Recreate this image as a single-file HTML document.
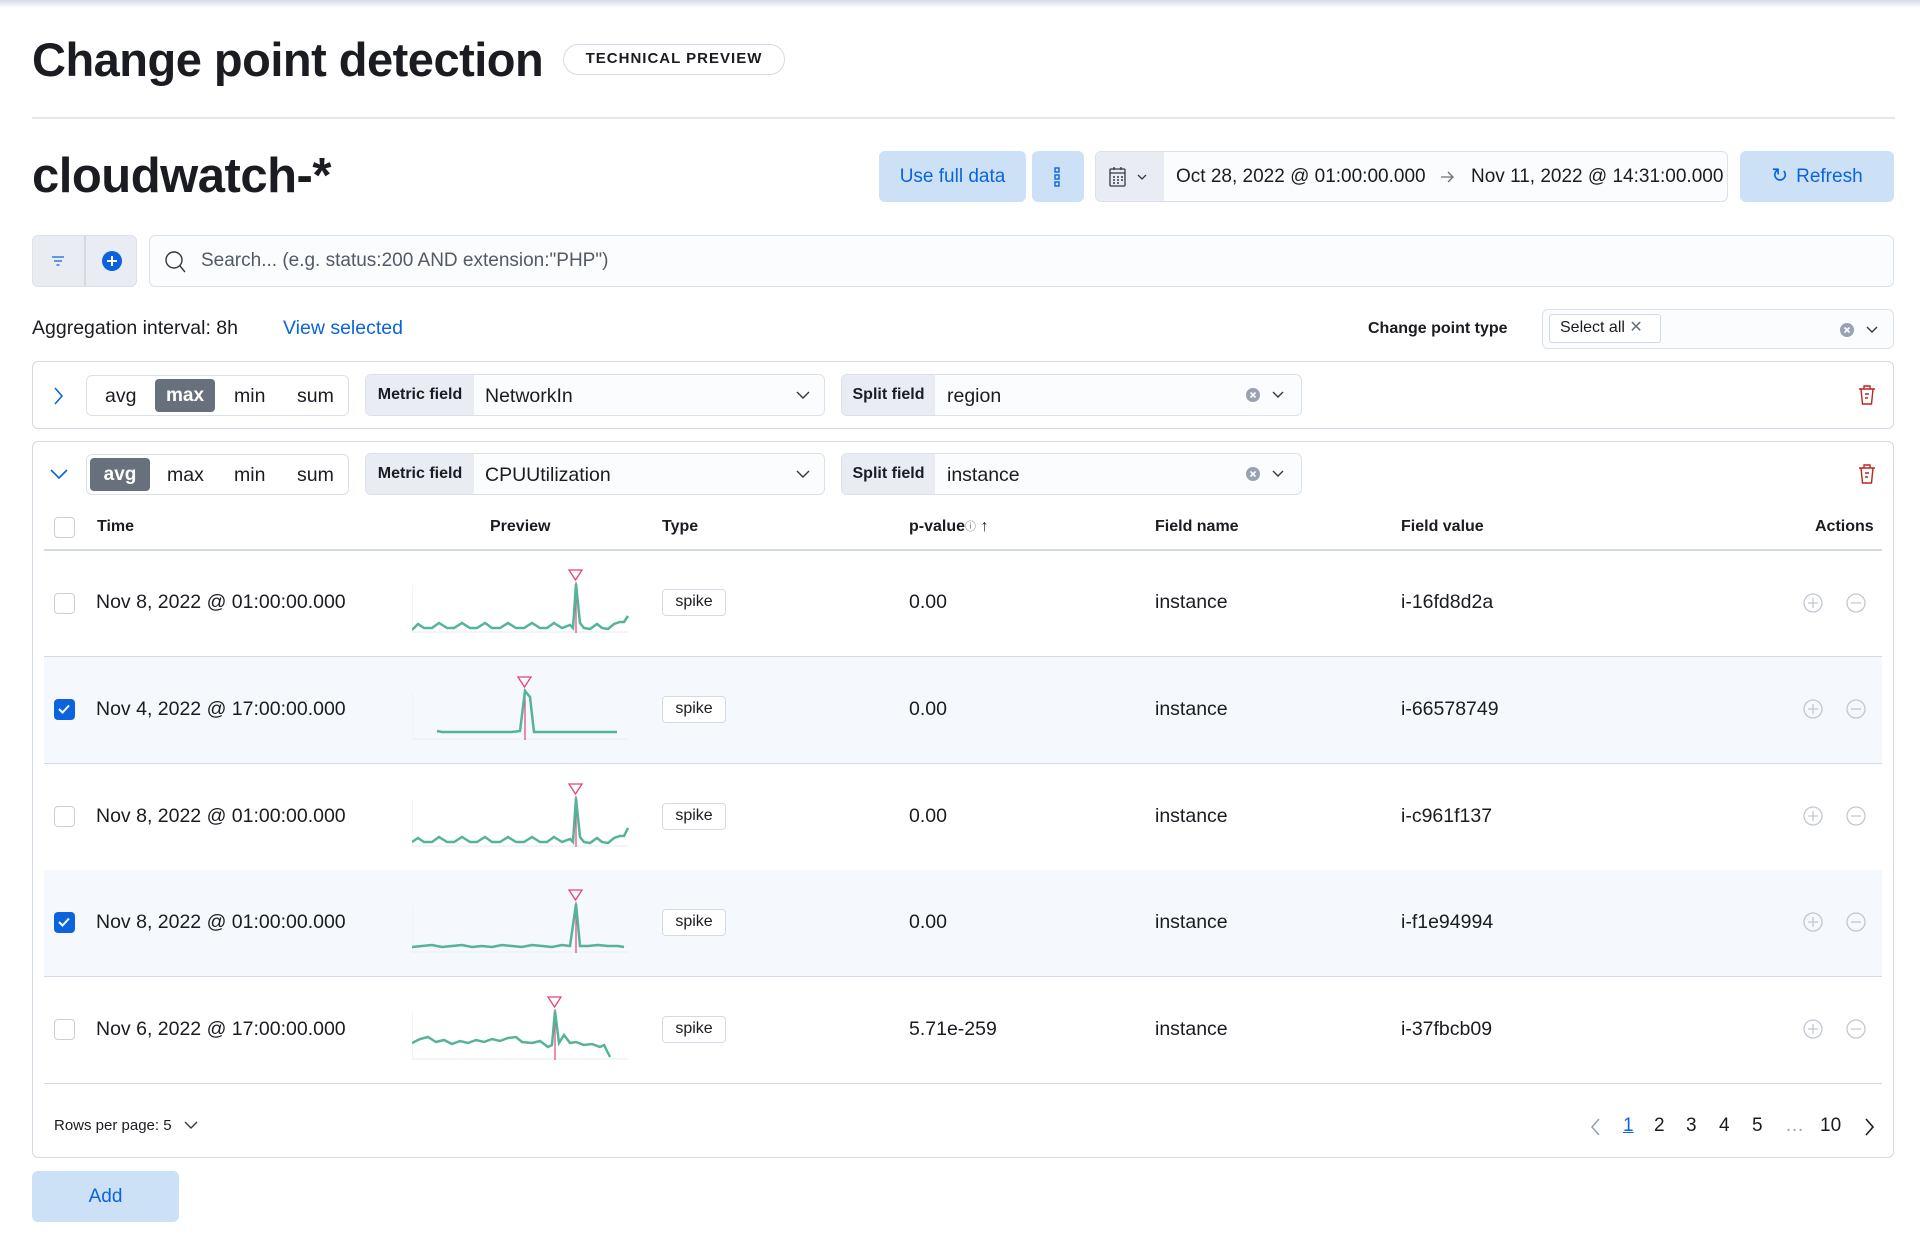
<!DOCTYPE html>
<html><head><meta charset="utf-8">
<style>
*{box-sizing:border-box;margin:0;padding:0}
body{width:1920px;height:1247px;background:#fff;font-family:"Liberation Sans",sans-serif;color:#1a1c21;position:relative;overflow:hidden}
.a{position:absolute}
.topsh{left:0;top:0;width:1920px;height:8px;background:linear-gradient(#d3dae6,#fff)}
h1{position:absolute;left:32px;top:32px;font-size:47px;font-weight:700;letter-spacing:-0.5px;color:#1a1c21}
.badge{left:563px;top:44px;width:222px;height:31px;border:1.5px solid #d3dae6;border-radius:16px;font-size:15px;font-weight:700;letter-spacing:1px;text-align:center;line-height:28px}
.hr{left:32px;top:117px;width:1863px;height:2px;background:#e3e8f0}
h2{position:absolute;left:32px;top:148px;font-size:49px;font-weight:700;letter-spacing:-0.5px}
.btn{background:#cce1f5;color:#0b64dd;border-radius:6px;font-size:19px;text-align:center}
.box{border:1.5px solid #dbe1ea;background:#fbfcfd;border-radius:6px}
.txt{font-size:19.5px;white-space:nowrap}
.lab{background:#e9edf3;font-size:16px;font-weight:700;display:flex;align-items:center;justify-content:center}
.th{font-size:16px;font-weight:700;top:518px}
.row{left:44px;width:1838px;height:107px;border-bottom:1.5px solid #d3dae6}
.sel{background:#f5f8fc}
.cb{width:21px;height:21px;border:1.5px solid #c9d0da;border-radius:4px;background:#fff}
.cb.on{background:#0b64dd;border-color:#0b64dd}
.spike{width:64px;height:27px;border:1.5px solid #d3dae6;border-radius:4px;font-size:16px;text-align:center;line-height:24px;background:#fff}
</style></head><body>
<div class="a topsh"></div>
<h1>Change point detection</h1>
<div class="a badge">TECHNICAL PREVIEW</div>
<div class="a hr"></div>
<h2>cloudwatch-*</h2>

<div class="a btn" style="left:879px;top:151px;width:147px;height:51px;line-height:51px">Use full data</div>
<div class="a btn" style="left:1032px;top:151px;width:52px;height:51px">
<svg class="a" style="left:20px;top:16px" width="10" height="20"><g fill="none" stroke="#0b64dd" stroke-width="1.4"><rect x="3" y="1" width="4" height="4"/><rect x="3" y="8" width="4" height="4"/><rect x="3" y="15" width="4" height="4"/></g></svg></div>
<div class="a box" style="left:1095px;top:151px;width:633px;height:51px;overflow:hidden">
<div class="a" style="left:0;top:0;width:68px;height:49px;background:#e9edf3"></div>
<svg class="a" style="left:13px;top:14px" width="40" height="22"><g fill="none" stroke="#343741" stroke-width="1.3"><rect x="1" y="3" width="15" height="17" rx="1"/><line x1="1" y1="7" x2="16" y2="7"/><line x1="5" y1="1" x2="5" y2="4"/><line x1="12" y1="1" x2="12" y2="4"/><path d="M4 11h2M8 11h2M12 11h2M4 14h2M8 14h2M12 14h2M4 17h2M8 17h2" stroke-width="1.5"/><path d="M29 9l4 4 4-4"/></g></svg>
<div class="a txt" style="left:80px;top:14px;font-size:19px">Oct 28, 2022 @ 01:00:00.000</div>
<svg class="a" style="left:343px;top:17px" width="16" height="16"><path d="M2 8h12M9 3l5 5-5 5" fill="none" stroke="#69707d" stroke-width="1.3"/></svg>
<div class="a txt" style="left:375px;top:14px;font-size:19px">Nov 11, 2022 @ 14:31:00.000</div>
</div>
<div class="a btn" style="left:1740px;top:151px;width:154px;height:51px;line-height:51px"><span style="display:inline-block;margin-right:8px;font-size:20px">↻</span>Refresh</div>

<div class="a box" style="left:32px;top:235px;width:105px;height:52px;background:#e9edf3;overflow:hidden">
<div class="a" style="left:51px;top:0;width:1.5px;height:52px;background:#d3dae6"></div>
<svg class="a" style="left:18px;top:19px" width="14" height="12"><g stroke="#0b64dd" stroke-width="1.3"><line x1="1" y1="2" x2="13" y2="2"/><line x1="3" y1="6" x2="11" y2="6"/><line x1="5.5" y1="10" x2="8.5" y2="10"/></g></svg>
<svg class="a" style="left:68px;top:14px" width="22" height="22"><circle cx="11" cy="11" r="10" fill="#0b64dd"/><path d="M11 6v10M6 11h10" stroke="#fff" stroke-width="2"/></svg>
</div>
<div class="a box" style="left:149px;top:235px;width:1745px;height:52px">
<svg class="a" style="left:14px;top:14px" width="24" height="24"><circle cx="10" cy="10" r="8" fill="none" stroke="#343741" stroke-width="1.4"/><line x1="16" y1="16" x2="21" y2="22" stroke="#343741" stroke-width="1.4"/></svg>
<div class="a txt" style="left:51px;top:14px;color:#535966;font-size:19px">Search... (e.g. status:200 AND extension:"PHP")</div>
</div>

<div class="a txt" style="left:32px;top:317px">Aggregation interval: 8h</div>
<div class="a txt" style="left:283px;top:317px;color:#0b64dd">View selected</div>
<div class="a" style="left:1368px;top:320px;font-size:16px;font-weight:700">Change point type</div>
<div class="a box" style="left:1542px;top:309px;width:352px;height:40px">
<div class="a" style="left:6px;top:4px;width:112px;height:29px;border:1.5px solid #d3dae6;border-radius:3px;background:#fff;font-size:16px;line-height:26px;padding-left:10px">Select all <span style="color:#69707d">✕</span></div>
<svg class="a" style="left:296px;top:10px" width="50" height="20"><circle cx="8" cy="10" r="7" fill="#98a2b3"/><path d="M5.5 7.5l5 5M10.5 7.5l-5 5" stroke="#fff" stroke-width="1.6"/><path d="M28 7l5 5 5-5" fill="none" stroke="#343741" stroke-width="1.4"/></svg>
</div>

<!-- Panel 1 -->
<div class="a" style="left:32px;top:361px;width:1862px;height:68px;border:1.5px solid #d3dae6;border-radius:6px"></div>
<svg class="a" style="left:52px;top:386px" width="12" height="20"><path d="M3 2l7 8-7 8" fill="none" stroke="#0b64dd" stroke-width="1.6"/></svg>
<div class="a box" style="left:86px;top:375px;width:263px;height:41px;background:#fff">
<div class="a txt" style="left:18px;top:9px">avg</div>
<div class="a" style="left:68px;top:3px;width:60px;height:33px;background:#69707d;border-radius:4px;color:#fff;font-weight:700;font-size:19px;text-align:center;line-height:33px">max</div>
<div class="a txt" style="left:147px;top:9px">min</div>
<div class="a txt" style="left:210px;top:9px">sum</div>
</div>
<div class="a box" style="left:365px;top:374px;width:460px;height:42px;overflow:hidden">
<div class="a lab" style="left:0;top:0;width:108px;height:40px">Metric field</div>
<div class="a txt" style="left:119px;top:10px">NetworkIn</div>
<svg class="a" style="left:430px;top:14px" width="14" height="12"><path d="M1 3l6 6 6-6" fill="none" stroke="#343741" stroke-width="1.4"/></svg>
</div>
<div class="a box" style="left:841px;top:374px;width:461px;height:42px;overflow:hidden">
<div class="a lab" style="left:0;top:0;width:93px;height:40px">Split field</div>
<div class="a txt" style="left:105px;top:10px">region</div>
<svg class="a" style="left:403px;top:10px" width="50" height="20"><circle cx="8" cy="10" r="7" fill="#98a2b3"/><path d="M5.5 7.5l5 5M10.5 7.5l-5 5" stroke="#fff" stroke-width="1.6"/><path d="M28 7l5 5 5-5" fill="none" stroke="#343741" stroke-width="1.4"/></svg>
</div>
<svg class="a" style="left:1857px;top:384px" width="20" height="22"><g fill="none" stroke="#bd271e" stroke-width="1.4"><path d="M2 5h16M7 5V2h6v3M4 5l1.5 15h9L16 5M8 10h4M8 14h3"/></g></svg>

<!-- Panel 2 -->
<div class="a" style="left:32px;top:441px;width:1862px;height:717px;border:1.5px solid #d3dae6;border-radius:6px"></div>
<svg class="a" style="left:49px;top:467px" width="20" height="14"><path d="M2 3l8 8 8-8" fill="none" stroke="#0b64dd" stroke-width="1.6"/></svg>
<div class="a box" style="left:86px;top:454px;width:263px;height:41px;background:#fff">
<div class="a" style="left:3px;top:3px;width:60px;height:33px;background:#69707d;border-radius:4px;color:#fff;font-weight:700;font-size:19px;text-align:center;line-height:33px">avg</div>
<div class="a txt" style="left:80px;top:9px">max</div>
<div class="a txt" style="left:147px;top:9px">min</div>
<div class="a txt" style="left:210px;top:9px">sum</div>
</div>
<div class="a box" style="left:365px;top:453px;width:460px;height:42px;overflow:hidden">
<div class="a lab" style="left:0;top:0;width:108px;height:40px">Metric field</div>
<div class="a txt" style="left:119px;top:10px">CPUUtilization</div>
<svg class="a" style="left:430px;top:14px" width="14" height="12"><path d="M1 3l6 6 6-6" fill="none" stroke="#343741" stroke-width="1.4"/></svg>
</div>
<div class="a box" style="left:841px;top:453px;width:461px;height:42px;overflow:hidden">
<div class="a lab" style="left:0;top:0;width:93px;height:40px">Split field</div>
<div class="a txt" style="left:105px;top:10px">instance</div>
<svg class="a" style="left:403px;top:10px" width="50" height="20"><circle cx="8" cy="10" r="7" fill="#98a2b3"/><path d="M5.5 7.5l5 5M10.5 7.5l-5 5" stroke="#fff" stroke-width="1.6"/><path d="M28 7l5 5 5-5" fill="none" stroke="#343741" stroke-width="1.4"/></svg>
</div>
<svg class="a" style="left:1857px;top:463px" width="20" height="22"><g fill="none" stroke="#bd271e" stroke-width="1.4"><path d="M2 5h16M7 5V2h6v3M4 5l1.5 15h9L16 5M8 10h4M8 14h3"/></g></svg>

<!-- table header -->
<div class="a cb" style="left:54px;top:517px"></div>
<div class="a th" style="left:97px">Time</div>
<div class="a th" style="left:490px">Preview</div>
<div class="a th" style="left:662px">Type</div>
<div class="a th" style="left:909px">p-value<span style="font-weight:400;font-size:11px;color:#69707d;vertical-align:top">ⓘ</span> <span style="font-weight:400">↑</span></div>
<div class="a th" style="left:1155px">Field name</div>
<div class="a th" style="left:1401px">Field value</div>
<div class="a th" style="left:1815px">Actions</div>
<div class="a" style="left:44px;top:549px;width:1838px;height:1.5px;background:#d3dae6"></div>

<!-- rows -->
<div class="a row" style="top:550px"></div>
<div class="a row sel" style="top:657px"></div>
<div class="a row" style="top:764px"></div>
<div class="a row sel" style="top:870px"></div>
<div class="a row" style="top:977px"></div>

<div class="a cb" style="left:54px;top:593px"></div>
<div class="a cb on" style="left:54px;top:699px"><svg width="18" height="18"><path d="M4 9l3.5 3.5L14 5.5" fill="none" stroke="#fff" stroke-width="2"/></svg></div>
<div class="a cb" style="left:54px;top:806px"></div>
<div class="a cb on" style="left:54px;top:912px"><svg width="18" height="18"><path d="M4 9l3.5 3.5L14 5.5" fill="none" stroke="#fff" stroke-width="2"/></svg></div>
<div class="a cb" style="left:54px;top:1019px"></div>

<div class="a txt" style="left:96px;top:591px">Nov 8, 2022 @ 01:00:00.000</div>
<div class="a txt" style="left:96px;top:698px">Nov 4, 2022 @ 17:00:00.000</div>
<div class="a txt" style="left:96px;top:805px">Nov 8, 2022 @ 01:00:00.000</div>
<div class="a txt" style="left:96px;top:911px">Nov 8, 2022 @ 01:00:00.000</div>
<div class="a txt" style="left:96px;top:1018px">Nov 6, 2022 @ 17:00:00.000</div>

<!-- sparklines -->
<svg class="a" style="left:412px;top:568px" width="218" height="68"><g fill="none"><path d="M0 17V64H216" stroke="#eef1f5" stroke-width="1.5"/><path d="M164 14V65" stroke="#e0457b" stroke-width="1.2"/><path d="M157 2h13l-6.5 10z" stroke="#e0457b" stroke-width="1.3"/><path d="M0 62L6 56 12 60 20 60 27 55 35 60 42 60 50 55 58 60 65 60 73 55 80 60 88 60 96 55 104 60 112 60 120 55 128 60 135 60 142 55 150 60 158 57 161 60 164 16 168 55 172 60 178 61 185 56 190 60 196 61 202 56 208 54 212 54 216 48" stroke="#54b399" stroke-width="2.5"/></g></svg>
<svg class="a" style="left:412px;top:675px" width="218" height="68"><g fill="none"><path d="M0 17V64H216" stroke="#eef1f5" stroke-width="1.5"/><path d="M113 14V65" stroke="#e0457b" stroke-width="1.2"/><path d="M106 2h13l-6.5 10z" stroke="#e0457b" stroke-width="1.3"/><path d="M25 56L30 57H100L108 56 113 16 118 22 122 57H205" stroke="#54b399" stroke-width="2.5"/></g></svg>
<svg class="a" style="left:412px;top:782px" width="218" height="68"><g fill="none"><path d="M0 17V64H216" stroke="#eef1f5" stroke-width="1.5"/><path d="M164 14V65" stroke="#e0457b" stroke-width="1.2"/><path d="M157 2h13l-6.5 10z" stroke="#e0457b" stroke-width="1.3"/><path d="M0 60L6 56 12 60 20 60 27 55 35 60 42 60 50 55 58 60 65 60 73 55 80 60 88 60 96 55 104 60 112 60 120 55 128 60 135 60 142 55 150 60 158 57 161 60 164 16 168 55 172 60 178 61 185 56 190 60 196 61 202 56 208 54 212 54 216 46" stroke="#54b399" stroke-width="2.5"/></g></svg>
<svg class="a" style="left:412px;top:888px" width="218" height="68"><g fill="none"><path d="M0 17V64H216" stroke="#eef1f5" stroke-width="1.5"/><path d="M164 14V65" stroke="#e0457b" stroke-width="1.2"/><path d="M157 2h13l-6.5 10z" stroke="#e0457b" stroke-width="1.3"/><path d="M0 59L10 58 20 57 30 59 40 58 50 57 60 59 70 58 80 59 90 57 100 58 110 59 120 57 130 58 140 59 150 57 158 58 164 16 168 58 176 58 186 57 196 58 206 58 212 59" stroke="#54b399" stroke-width="2.5"/></g></svg>
<svg class="a" style="left:412px;top:995px" width="218" height="68"><g fill="none"><path d="M0 17V64H216" stroke="#eef1f5" stroke-width="1.5"/><path d="M143 14V65" stroke="#e0457b" stroke-width="1.2"/><path d="M136 2h13l-6.5 10z" stroke="#e0457b" stroke-width="1.3"/><path d="M0 48L8 44 16 42 24 47 32 45 40 49 48 46 56 48 64 45 72 47 80 44 88 46 96 43 104 42 110 47 120 48 128 46 136 52 140 50 143 16 147 48 152 40 158 48 164 47 172 50 180 49 188 52 192 50 198 62" stroke="#54b399" stroke-width="2.5"/></g></svg>

<div class="a spike" style="left:662px;top:589px">spike</div>
<div class="a spike" style="left:662px;top:696px">spike</div>
<div class="a spike" style="left:662px;top:803px">spike</div>
<div class="a spike" style="left:662px;top:909px">spike</div>
<div class="a spike" style="left:662px;top:1016px">spike</div>

<div class="a txt" style="left:909px;top:591px">0.00</div>
<div class="a txt" style="left:909px;top:698px">0.00</div>
<div class="a txt" style="left:909px;top:805px">0.00</div>
<div class="a txt" style="left:909px;top:911px">0.00</div>
<div class="a txt" style="left:909px;top:1018px">5.71e-259</div>

<div class="a txt" style="left:1155px;top:591px">instance</div>
<div class="a txt" style="left:1155px;top:698px">instance</div>
<div class="a txt" style="left:1155px;top:805px">instance</div>
<div class="a txt" style="left:1155px;top:911px">instance</div>
<div class="a txt" style="left:1155px;top:1018px">instance</div>

<div class="a txt" style="left:1401px;top:591px">i-16fd8d2a</div>
<div class="a txt" style="left:1401px;top:698px">i-66578749</div>
<div class="a txt" style="left:1401px;top:805px">i-c961f137</div>
<div class="a txt" style="left:1401px;top:911px">i-f1e94994</div>
<div class="a txt" style="left:1401px;top:1018px">i-37fbcb09</div>

<svg class="a" style="left:1802px;top:592px" width="66" height="24"><g fill="none" stroke="#c2c8d2" stroke-width="1.3"><circle cx="11" cy="11" r="9"/><path d="M11 6v10M6 11h10"/><circle cx="54" cy="11" r="9"/><path d="M49 11h10"/></g></svg>
<svg class="a" style="left:1802px;top:698px" width="66" height="24"><g fill="none" stroke="#c2c8d2" stroke-width="1.3"><circle cx="11" cy="11" r="9"/><path d="M11 6v10M6 11h10"/><circle cx="54" cy="11" r="9"/><path d="M49 11h10"/></g></svg>
<svg class="a" style="left:1802px;top:805px" width="66" height="24"><g fill="none" stroke="#c2c8d2" stroke-width="1.3"><circle cx="11" cy="11" r="9"/><path d="M11 6v10M6 11h10"/><circle cx="54" cy="11" r="9"/><path d="M49 11h10"/></g></svg>
<svg class="a" style="left:1802px;top:911px" width="66" height="24"><g fill="none" stroke="#c2c8d2" stroke-width="1.3"><circle cx="11" cy="11" r="9"/><path d="M11 6v10M6 11h10"/><circle cx="54" cy="11" r="9"/><path d="M49 11h10"/></g></svg>
<svg class="a" style="left:1802px;top:1018px" width="66" height="24"><g fill="none" stroke="#c2c8d2" stroke-width="1.3"><circle cx="11" cy="11" r="9"/><path d="M11 6v10M6 11h10"/><circle cx="54" cy="11" r="9"/><path d="M49 11h10"/></g></svg>

<!-- pagination -->
<div class="a" style="left:54px;top:1117px;font-size:15px">Rows per page: 5 <svg width="14" height="10" style="margin-left:8px"><path d="M1 2l6 6 6-6" fill="none" stroke="#343741" stroke-width="1.4"/></svg></div>
<div class="a" style="left:1590px;top:1115px;font-size:19px;white-space:nowrap">
<svg class="a" style="left:0;top:2px" width="12" height="20"><path d="M9 2l-7 8 7 8" fill="none" stroke="#98a2b3" stroke-width="1.6"/></svg>
<span class="a" style="left:33px;color:#0b64dd;text-decoration:underline">1</span>
<span class="a" style="left:64px">2</span>
<span class="a" style="left:96px">3</span>
<span class="a" style="left:129px">4</span>
<span class="a" style="left:162px">5</span>
<span class="a" style="left:195px;color:#98a2b3">…</span>
<span class="a" style="left:230px">10</span>
<svg class="a" style="left:273px;top:2px" width="12" height="20"><path d="M3 2l7 8-7 8" fill="none" stroke="#1a1c21" stroke-width="1.6"/></svg>
</div>

<div class="a btn" style="left:32px;top:1171px;width:147px;height:51px;line-height:51px">Add</div>
</body></html>
